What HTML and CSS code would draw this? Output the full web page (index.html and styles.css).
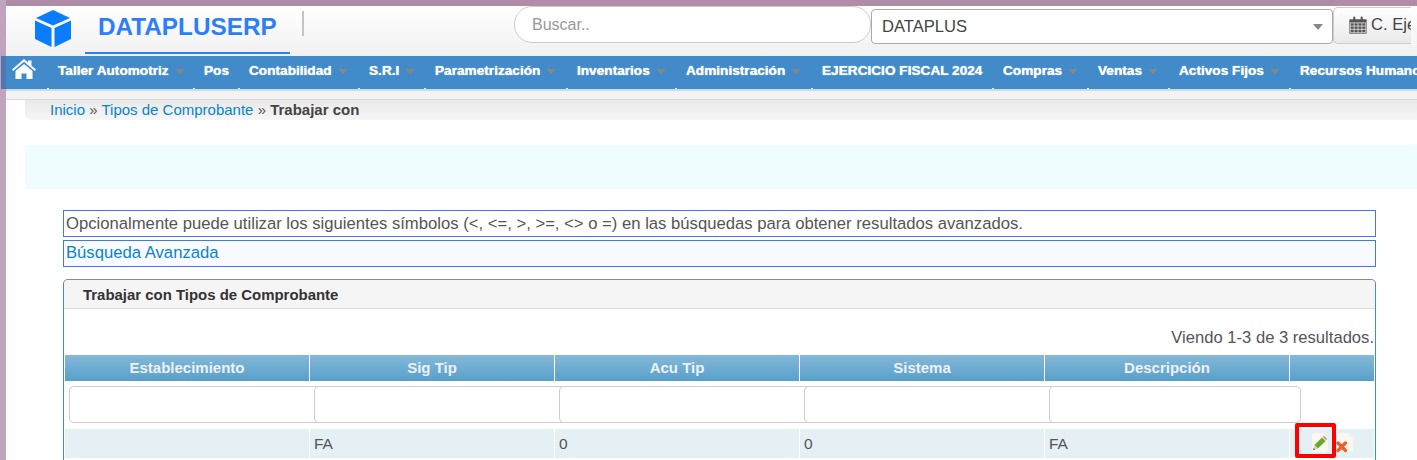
FILE: index.html
```html
<!DOCTYPE html>
<html lang="es">
<head>
<meta charset="utf-8">
<title>Tipos de Comprobante</title>
<link rel="stylesheet" href="styles.css">
</head>
<body>
<div class="page">
  <header class="topbar">
    <svg class="logo" viewBox="0 0 36 37" aria-hidden="true">
      <path fill="#0a7cff" d="M18 0 35 8 18 15.500 1 8Z"/>
      <path fill="#0a7cff" d="M0 10.500 16.500 18V37L0 29Z"/>
      <path fill="#0a7cff" d="M36 10.500 19.500 18V37L36 29Z"/>
    </svg>
    <div class="brand">DATAPLUSERP</div>
    <span class="brand-sep"></span>
    <input class="search" type="text" placeholder="Buscar..">
    <div class="select"><span>DATAPLUS</span><i class="select-arrow"></i></div>
    <button class="year-btn" type="button">
      <svg class="cal" viewBox="0 0 17 17" aria-hidden="true">
        <path fill="#555" d="M1 3h3V1.500a1 1 0 0 1 2 0V3h5V1.500a1 1 0 0 1 2 0V3h3a.7.700 0 0 1 .7.700V16a.7.700 0 0 1-.7.700H1a.7.700 0 0 1-.7-.700V3.700A.7.700 0 0 1 1 3Z"/>
        <path fill="none" stroke="#eee" stroke-width=".7" d="M1.200 6.500h14.600v9.300H1.200ZM1.200 9.500h14.600M1.200 12.600h14.600M4.800 6.500v9.300M8.500 6.500v9.300M12.200 6.500v9.300"/>
      </svg>
      <span>C. Ejercicio</span>
    </button>
  </header>

  <nav class="menu">
    <svg class="home" viewBox="0 0 24 20" aria-hidden="true">
      <path fill="#fff" d="M12 0 16 3.600V1.500h3.500v5.200L24 10.500l-1.200 1.400L12 2.800 1.200 11.900 0 10.500Z"/>
      <path fill="#fff" d="M12 5 20.500 12v8H14.500v-5.500h-5V20H3.500v-8Z"/>
    </svg>
    <ul class="menu-list">
      <li class="menu-item m1 has-sub">Taller Automotriz</li>
      <li class="menu-item m2">Pos</li>
      <li class="menu-item m3 has-sub">Contabilidad</li>
      <li class="menu-item m4 has-sub">S.R.I</li>
      <li class="menu-item m5 has-sub">Parametrización</li>
      <li class="menu-item m6 has-sub">Inventarios</li>
      <li class="menu-item m7 has-sub">Administración</li>
      <li class="menu-item m8">EJERCICIO FISCAL 2024</li>
      <li class="menu-item m9 has-sub">Compras</li>
      <li class="menu-item m10 has-sub">Ventas</li>
      <li class="menu-item m11 has-sub">Activos Fijos</li>
      <li class="menu-item m12 has-sub">Recursos Humanos</li>
    </ul>
  </nav>
  <div class="menu-under"></div>

  <div class="crumbs"><a href="#">Inicio</a> » <a href="#">Tipos de Comprobante</a> » <strong>Trabajar con</strong></div>
  <div class="flash"></div>

  <main class="content">
    <p class="note">Opcionalmente puede utilizar los siguientes símbolos (&lt;, &lt;=, &gt;, &gt;=, &lt;&gt; o =) en las búsquedas para obtener resultados avanzados.</p>
    <p class="note note-link"><a href="#">Búsqueda Avanzada</a></p>

    <section class="panel">
      <h2 class="panel-title">Trabajar con Tipos de Comprobante</h2>
      <div class="summary">Viendo 1-3 de 3 resultados.</div>
      <table class="grid">
        <colgroup>
          <col class="col-data"><col class="col-data"><col class="col-data"><col class="col-data"><col class="col-data"><col>
        </colgroup>
        <thead>
          <tr class="head">
            <th>Establecimiento</th><th>Sig Tip</th><th>Acu Tip</th><th>Sistema</th><th>Descripción</th><th></th>
          </tr>
          <tr class="filters">
            <td><input type="text"></td><td><input type="text"></td><td><input type="text"></td><td><input type="text"></td><td><input type="text"></td><td></td>
          </tr>
        </thead>
        <tbody>
          <tr class="row">
            <td></td><td>FA</td><td>0</td><td>0</td><td>FA</td>
            <td class="actions">
              <span class="act act-edit">
                <svg viewBox="0 0 17 19" aria-hidden="true">
                  <path fill="#f9f7f0" d="M3 0h9l5 5v12a2 2 0 0 1-2 2H3a2 2 0 0 1-2-2V2a2 2 0 0 1 2-2Z"/>
                  <path fill="#6aa832" d="M3.500 12 11 4.500l3.500 3.500L7 15.500Z"/>
                  <path fill="#e59a86" d="M11.500 4 13 2.500 16.500 6 15 7.500Z"/>
                  <path fill="#e6d39c" d="M3.500 12 7 15.500 2 17Z"/>
                  <path fill="#555" d="M2.800 15 4.200 16.400 2 17Z"/>
                </svg>
              </span>
              <span class="act act-del">
                <svg viewBox="0 0 17 20" aria-hidden="true">
                  <path fill="#f9f7f0" d="M3 0h9l5 5v12a2 2 0 0 1-2 2H3a2 2 0 0 1-2-2V2a2 2 0 0 1 2-2Z"/>
                  <path stroke="#e8622c" stroke-width="3.400" stroke-linecap="round" d="M2 10 9.500 17.500M9.500 10 2 17.500"/>
                </svg>
              </span>
              <span class="highlight"></span>
            </td>
          </tr>
        </tbody>
      </table>
    </section>
  </main>
</div>
</body>
</html>
```

FILE: styles.css
```css
* { box-sizing: border-box; }
html, body { margin: 0; height: 460px; overflow: hidden; }
body {
  background: #bfa3bf;
  font-family: "Liberation Sans", Arial, sans-serif;
  color: #555;
  width: 1417px;
}
.page {
  margin: 6px 0 0 6px;
  height: 454px;
  background: #fff;
  box-shadow: 0 -6px 0 #b08ca8;
  position: relative;
}
a { color: #0a84c6; text-decoration: none; }

.topbar {
  height: 50px;
  display: flex;
  align-items: flex-start;
  background: linear-gradient(#fff, #f1f1f1);
  white-space: nowrap;
}
.logo { width: 36px; height: 37px; margin: 4px 0 0 29px; flex: none; }
.brand {
  width: 205px;
  height: 48px;
  margin-left: 14px;
  padding: 7px 0 0 13px;
  border-bottom: 2px solid #2d7ff9;
  color: #2d7ff9;
  font-size: 24.300px;
  font-weight: 700;
  line-height: 28px;
  flex: none;
}
.brand-sep { width: 2px; height: 25px; margin: 5px 0 0 12px; background: #c4c4c4; flex: none; }
.search {
  width: 357px;
  height: 37px;
  margin-left: 210px;
  padding: 0 17px;
  border: 1px solid #ccc;
  border-radius: 18px;
  background: #fff;
  font: 16px "Liberation Sans", Arial, sans-serif;
  flex: none;
}
.search::placeholder { color: #999; opacity: 1; }
.select {
  width: 462px;
  height: 35px;
  margin-top: 3px;
  padding: 0 10px;
  display: flex;
  align-items: center;
  justify-content: space-between;
  border: 1px solid #aaa;
  border-radius: 4px;
  background: #fff;
  color: #444;
  font-size: 16.600px;
  flex: none;
}
.select span { padding-top: 1px; }
.select-arrow {
  margin-right: -1px;
  border: 5px solid transparent;
  border-top: 6px solid #888;
  border-bottom: 0;
}
.year-btn {
  width: 78px;
  height: 37px;
  margin: 1px 0 0 0;
  padding: 0 0 2px 15px;
  display: flex;
  align-items: center;
  gap: 4px;
  border: 1px solid #ccc;
  border-right: 0;
  border-radius: 5px 0 0 5px;
  background: linear-gradient(#fff, #e9e9e9);
  color: #444;
  font: 16.600px "Liberation Sans", Arial, sans-serif;
  white-space: nowrap;
  overflow: hidden;
  flex: none;
}
.cal { width: 18px; height: 18px; flex: none; }

.menu {
  height: 33px;
  margin-left: -5px;
  display: flex;
  align-items: flex-start;
  background: #428bca;
  box-shadow: inset 5px 0 0 #4f76ad;
  overflow: hidden;
  white-space: nowrap;
}
.home { width: 24px; height: 20px; margin: 3px 0 0 11px; flex: none; }
.menu-list {
  list-style: none;
  height: 33px;
  margin: 0;
  padding: 0 0 0 22px;
  display: flex;
  color: #fff;
  font-size: 13.650px;
  font-weight: 700;
}
.menu-item {
  position: relative;
  height: 33px;
  padding-top: 6px;
  line-height: 17px;
  text-shadow: 0 0 1px #fff;
  flex: none;
}
.menu-item::before {
  content: "";
  position: absolute;
  left: -11px;
  bottom: 0;
  width: 2px;
  height: 1px;
  background: #e8f0f8;
}
.m1 { width: 146px; }
.m2 { width: 45px; }
.m3 { width: 120px; }
.m4 { width: 66px; }
.m5 { width: 142px; }
.m6 { width: 109px; }
.m7 { width: 136px; }
.m8 { width: 181px; }
.m9 { width: 95px; }
.m10 { width: 81px; }
.m11 { width: 121px; }
.m12 { width: 140px; }
.has-sub::after {
  content: "";
  display: inline-block;
  margin-left: 6px;
  vertical-align: 1px;
  border: 5px solid transparent;
  border-top: 5px solid #8d8480;
  border-bottom: 0;
}
.menu-under {
  height: 11px;
  background: #f3f3f3;
  border-top: 2px solid #c9dcec;
  border-bottom: 1px solid #d9d9d9;
}

.crumbs {
  height: 20px;
  margin-left: 19px;
  padding-left: 25px;
  background: linear-gradient(#e9e9e9, #f6f6f6);
  border-radius: 0 0 0 5px;
  color: #555;
  font-size: 15px;
  line-height: 20px;
}
.crumbs strong { color: #444; }
.flash {
  height: 44px;
  margin: 25px 0 0 19px;
  background: #f0fdff;
}
.content { padding: 21px 41px 0 57px; }
.note {
  height: 27px;
  margin: 0 0 3px;
  padding-left: 2px;
  border: 1px solid #4179e0;
  color: #555;
  font-size: 16.670px;
  line-height: 25px;
  white-space: nowrap;
}
.note-link { background: #f7fbff; line-height: 23px; }
.panel {
  margin-top: 12px;
  height: 190px;
  border: 1px solid #8a8a8a;
  border-left-color: #428bca;
  border-right-color: #428bca;
  border-bottom: 0;
  border-radius: 5px 5px 0 0;
}
.panel-title {
  height: 29px;
  margin: 0;
  padding-left: 19px;
  background: #f5f5f5;
  border-bottom: 1px solid #ddd;
  border-radius: 5px 5px 0 0;
  color: #333;
  font-size: 14.950px;
  font-weight: 700;
  line-height: 30px;
}
.summary {
  height: 46px;
  padding: 19px 1px 0 0;
  text-align: right;
  font-size: 16.600px;
  line-height: 20px;
  color: #555;
}
.grid {
  width: 1309px;
  margin-left: 1px;
  border-collapse: separate;
  border-spacing: 0;
  table-layout: fixed;
}
.col-data { width: 245px; }
.head th {
  height: 26px;
  padding: 0;
  border-right: 1px solid #fff;
  background: linear-gradient(#85b9d9, #579fca);
  color: #eef1f4;
  font-size: 15px;
  font-weight: 700;
  text-align: center;
  line-height: 26px;
}
.head th:last-child { border-right: 0; }
.filters td { height: 48px; padding: 0 0 0 4px; vertical-align: top; }
.filters input {
  display: block;
  position: relative;
  width: 252px;
  height: 37px;
  margin-top: 5px;
  border: 1px solid #ccc;
  border-radius: 5px;
  background: #fff;
}
.row td {
  height: 29px;
  padding: 0 0 0 4px;
  border-right: 1px solid #fff;
  background: #e5f0f5;
  font-size: 15.500px;
  color: #555;
}
.row td:last-child { border-right: 0; }
.actions { position: relative; }
.act { position: absolute; }
.act svg { display: block; width: 100%; height: 100%; }
.act-edit { left: 21px; top: 4px; width: 17px; height: 19px; }
.act-del { left: 46px; top: 4px; width: 17px; height: 20px; }
.highlight {
  position: absolute;
  left: 5px;
  top: -6px;
  width: 41px;
  height: 35px;
  border: 4px solid #f00;
  border-radius: 2px;
}
```
